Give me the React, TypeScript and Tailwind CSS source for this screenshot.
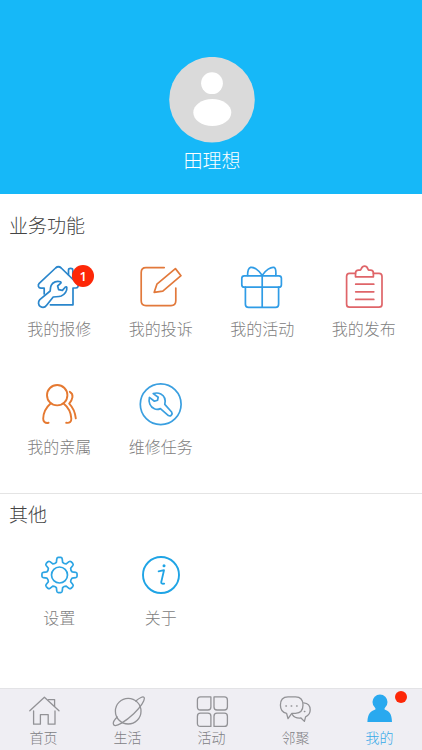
import React from 'react';

const gearPath = (() => {
  // eight rounded teeth around the hub
  const cx = 24.5;
  const cy = 22;
  const pt = (r: number, deg: number) => {
    const a = (deg * Math.PI) / 180;
    return `${(cx + r * Math.cos(a)).toFixed(2)} ${(cy + r * Math.sin(a)).toFixed(2)}`;
  };
  let d = '';
  for (let i = 0; i < 8; i++) {
    const a = i * 45;
    d += `${i === 0 ? 'M' : 'L'}${pt(13, a - 14)} L${pt(16.4, a - 9.5)} Q${pt(17.6, a - 8)} ${pt(17.6, a - 4)} L${pt(17.6, a + 4)} Q${pt(17.6, a + 8)} ${pt(16.4, a + 9.5)} L${pt(13, a + 14)} Q${pt(12, a + 22.5)} ${pt(13, a + 31)} `;
  }
  return d + 'Z';
})();

type IconProps = { color: string; children: React.ReactNode };

function Icon({ color, children }: IconProps) {
  return (
    <svg className="w-12 h-12" viewBox="0 0 48 48" fill="none" stroke={color} strokeWidth="1.7" strokeLinecap="round" strokeLinejoin="round">
      {children}
    </svg>
  );
}

const services = [
  {
    label: '我的报修',
    badge: '1',
    icon: (
      <Icon color="#2a86cc">
        <path d="M9.2 30V24.2H6C3.2 24 2.6 21.2 4.2 19.4L20.6 4C22.4 2.4 24.4 2.4 26.2 4L42.6 19.8C44 21.8 43 24 40.6 24H38V40.8H15.4" />
        <path d="M33.5 10.4V6Q33.5 4.4 35.6 4.4T37.8 6V14" />
        <path d="M25.4 17.8C22 16.6 17.8 18 16.2 21.4C15.2 23.6 15.4 25.4 15.2 27L4.8 35.6C2.8 37.8 3.2 41 5.4 42.6C7.8 44 10.2 43.2 11.6 41.2L18.2 33C20.8 32.6 23.6 33 26.2 32C29.6 30.6 32.4 27 31.8 23.4C31.6 22.6 30.8 22.6 30.2 23.2L27.4 26.4L23.6 25.6L22.6 22L25.8 19.2Q26.4 18.2 25.4 17.8Z" />
      </Icon>
    ),
  },
  {
    label: '我的投诉',
    icon: (
      <Icon color="#e2793b">
        <path d="M27.2 3.6H9C5.8 3.6 4.2 5.2 4.2 8.4V36.8C4.2 40 5.8 41.6 9 41.6H34C37.2 41.6 38.8 40 38.8 36.8V24" />
        <path d="M38.4 4.6L44 11.7L25.8 27.1L17.2 28.3L19.9 20.2Z" />
      </Icon>
    ),
  },
  {
    label: '我的活动',
    icon: (
      <Icon color="#2f9ce6">
        <rect x="3.8" y="11.8" width="39.6" height="11.4" rx="2.5" />
        <path d="M7.4 23.2V40.2Q7.4 43.4 10.6 43.4H37.6Q40.6 43.4 40.6 40.2V23.2M24.2 11.8V43.4" />
        <path d="M24.2 11.4C21 6 15.5 2.7 12.6 3.4C9.8 4.1 9.6 8 9.6 11.5M24.2 11.4C27.5 6 33 2.7 36 3.4C38.4 4.1 38 8 37.8 11.5" />
      </Icon>
    ),
  },
  {
    label: '我的发布',
    icon: (
      <Icon color="#df6569">
        <path d="M15.5 9.4H9.5Q6.6 9.4 6.6 12.4V40.2Q6.6 43.2 9.5 43.2H39Q42 43.2 42 40.2V12.4Q42 9.4 39 9.4H33.4" />
        <path d="M15.5 9.2Q15.5 6.2 18.5 6.2H20.2C21.5 6 21 2.2 24.6 2.2S27.5 6 28.8 6.2H30.5Q33.4 6.2 33.4 9.2V12.8H15.5Z" />
        <path d="M15.7 20.2H33.8M15.7 27.8H33.8M15.7 35.4H33.8" />
      </Icon>
    ),
  },
  {
    label: '我的亲属',
    icon: (
      <Icon color="#e57931">
        <g strokeWidth="1.9">
          <circle cx="22.2" cy="13.2" r="10.2" />
          <path d="M15.6 21.5C11 25.5 8.4 31 8.2 36.5C8 39.2 10 41.6 13.6 40.8M28.6 21.5C33.5 25.5 36 31 36.3 36.5C36.5 39.5 34.8 41.4 31.2 40.8" />
          <path d="M34.8 9.8C39.3 12.2 37.6 17.4 34.2 21.6C38 25.5 40.2 30.5 40.8 36.4" />
        </g>
      </Icon>
    ),
  },
  {
    label: '维修任务',
    icon: (
      <Icon color="#3a9fe0">
        <circle cx="23.7" cy="22.3" r="20.4" />
        <path d="M16.2 11.6L21.2 15.2L20.6 18.2L17.4 19.2L12.4 15.4C11.2 20.2 13.2 25 17.4 26.8C19.4 27.7 21.6 27.4 23.4 26.6L31.4 33.6C33.6 34.8 36 32.2 34.6 30L27.8 22.4C28.8 18 27.6 14 23.8 12C21.4 10.8 18.6 10.8 16.2 11.6Z" />
      </Icon>
    ),
  },
];

const others = [
  {
    label: '设置',
    icon: (
      <Icon color="#2ca5e4">
        <path d={gearPath} />
        <circle cx="24.5" cy="22" r="8" />
      </Icon>
    ),
  },
  {
    label: '关于',
    icon: (
      <Icon color="#1fa4e5">
        <circle cx="24" cy="22" r="18" strokeWidth="1.9" />
        <path d="M21.6 18.4L27 17.2L24.2 29.2Q24 31.2 27.2 30.6" strokeWidth="1.8" />
        <circle cx="27" cy="12.8" r="1.5" fill="#1fa4e5" stroke="none" />
      </Icon>
    ),
  },
];

const tabs = [
  {
    label: '首页',
    icon: (
      <>
        <path d="M2.8 16.8L17.4 3.2L32 16.8" />
        <path d="M6.6 17V30.2H13.4V20.6H21.2V30.2H28V17M21.4 5.6H27.6V12.2" />
      </>
    ),
  },
  {
    label: '生活',
    icon: (
      <>
        <circle cx="17.2" cy="17.2" r="12.8" />
        <path d="M24.8 7.1C28.7 3.6 32 2.2 33 3.4C34.7 5.6 29.7 13 22.7 19.8C14.7 27.4 5 33.4 2.9 31C1.7 29.6 3 26.2 6.2 23" />
      </>
    ),
  },
  {
    label: '活动',
    icon: (
      <>
        <path d="M5.5 2.9H15.9V13Q15.9 16 12.9 16H5.4Q2.4 16 2.4 13V6Q2.4 2.9 5.5 2.9Z" />
        <path d="M19 2.9H29.4Q32.4 2.9 32.4 5.9V13Q32.4 16 29.4 16H22Q19 16 19 13Z" />
        <path d="M5.4 19.2H12.9Q15.9 19.2 15.9 22.2V32.4H5.4Q2.4 32.4 2.4 29.4V22.2Q2.4 19.2 5.4 19.2Z" />
        <path d="M22 19.2H29.4Q32.4 19.2 32.4 22.2V29.4Q32.4 32.4 29.4 32.4H19V22.2Q19 19.2 22 19.2Z" />
      </>
    ),
  },
  {
    label: '邻聚',
    icon: (
      <>
        <path d="M9 2.9H16.5Q24 2.9 24 11.1Q24 19.1 16.5 19.3H12.8L9 24.6L7.6 19.3Q1.4 18.3 1.4 11.1Q1.4 2.9 9 2.9Z" />
        <path d="M24.6 8.8C29.4 9.2 31.2 12.2 31.2 15.8C31.2 19.4 29.4 21.6 26.6 22.8L25.4 27.4L22 24C18 24.4 15 23.2 13.4 20.6" />
        <path d="M6.9 12H7.4M12.2 12H12.7M17.6 12H18.1M25.4 17.4H25.8" strokeWidth="1.5" />
      </>
    ),
  },
  {
    label: '我的',
    active: true,
    icon: (
      <g fill="#29a9ef" stroke="none">
        <circle cx="17" cy="8" r="7.5" />
        <path d="M12.4 11.5H21.6V15.6C26.4 17.2 28.7 20 29 27.9H4.4C4.8 20 7.4 17.2 12.4 15.6Z" />
      </g>
    ),
  },
];

type Item = { label: string; icon: React.ReactNode; badge?: string };

function ItemGrid({ items }: { items: Item[] }) {
  return (
    <div className="grid grid-cols-[repeat(4,101.5px)] gap-y-[40px] pl-[8.5px] mt-[22px]">
      {items.map((item) => (
        <div key={item.label} className="flex flex-col items-center">
          <div className="relative w-12 h-12">
            {item.icon}
            {item.badge && (
              <span className="absolute left-[37px] top-[1px] w-[22px] h-[22px] rounded-full bg-[#fd2707] text-white text-[13px] leading-[22px] text-center font-['Open_Sans',sans-serif] font-semibold">
                {item.badge}
              </span>
            )}
          </div>
          <span className="mt-[6px] text-[16px] leading-6 text-[#808080]">{item.label}</span>
        </div>
      ))}
    </div>
  );
}

export default function App() {
  return (
    <div className="w-full max-w-[422px] h-[750px] flex flex-col bg-white overflow-hidden font-light font-['Liberation_Sans','Noto_Sans_CJK_SC',sans-serif]">
      {/* Profile header */}
      <header className="h-[194px] shrink-0 bg-[#16b8f8] flex flex-col items-center pt-[57px]">
        <svg className="w-[86px] h-[86px] ml-[1px]" viewBox="0 0 86 86">
          <circle cx="43" cy="42.7" r="42.8" fill="#dadada" />
          <circle cx="43" cy="26.2" r="10.9" fill="#fff" />
          <ellipse cx="43.3" cy="55.5" rx="19" ry="13.6" fill="#fff" />
        </svg>
        <h1 className="mt-[5px] ml-[2px] text-[19px] leading-7 text-white">田理想</h1>
      </header>

      <section className="h-[299px] shrink-0 pt-[18px]">
        <h2 className="pl-[9px] text-[19px] leading-[30px] text-[#444444]">业务功能</h2>
        <ItemGrid items={services} />
      </section>

      <section className="flex-1 border-t border-[#e4e4e4] pt-[7px]">
        <h2 className="pl-[9px] text-[19px] leading-[30px] text-[#444444]">其他</h2>
        <ItemGrid items={others} />
      </section>

      {/* Bottom tab bar */}
      <nav className="h-[62px] shrink-0 bg-[#efeef3] border-t border-[#e3e3e6] grid grid-cols-[repeat(5,84px)] pl-[1.5px]">
        {tabs.map((tab) => (
          <div key={tab.label} className="flex flex-col items-center pt-[5px]">
            <div className="relative w-[34px] h-[34px]">
              <svg className="w-[34px] h-[34px]" viewBox="0 0 34 34" fill="none" stroke="#929296" strokeWidth="1.3" strokeLinecap="round" strokeLinejoin="round">
                {tab.icon}
              </svg>
              {tab.active && <span className="absolute left-[32px] -top-[3px] w-3 h-3 rounded-full bg-[#fd2707]" />}
            </div>
            <span className={`text-[14px] leading-5 ${tab.active ? 'text-[#36a9e8]' : 'text-[#808084]'}`}>{tab.label}</span>
          </div>
        ))}
      </nav>
    </div>
  );
}
